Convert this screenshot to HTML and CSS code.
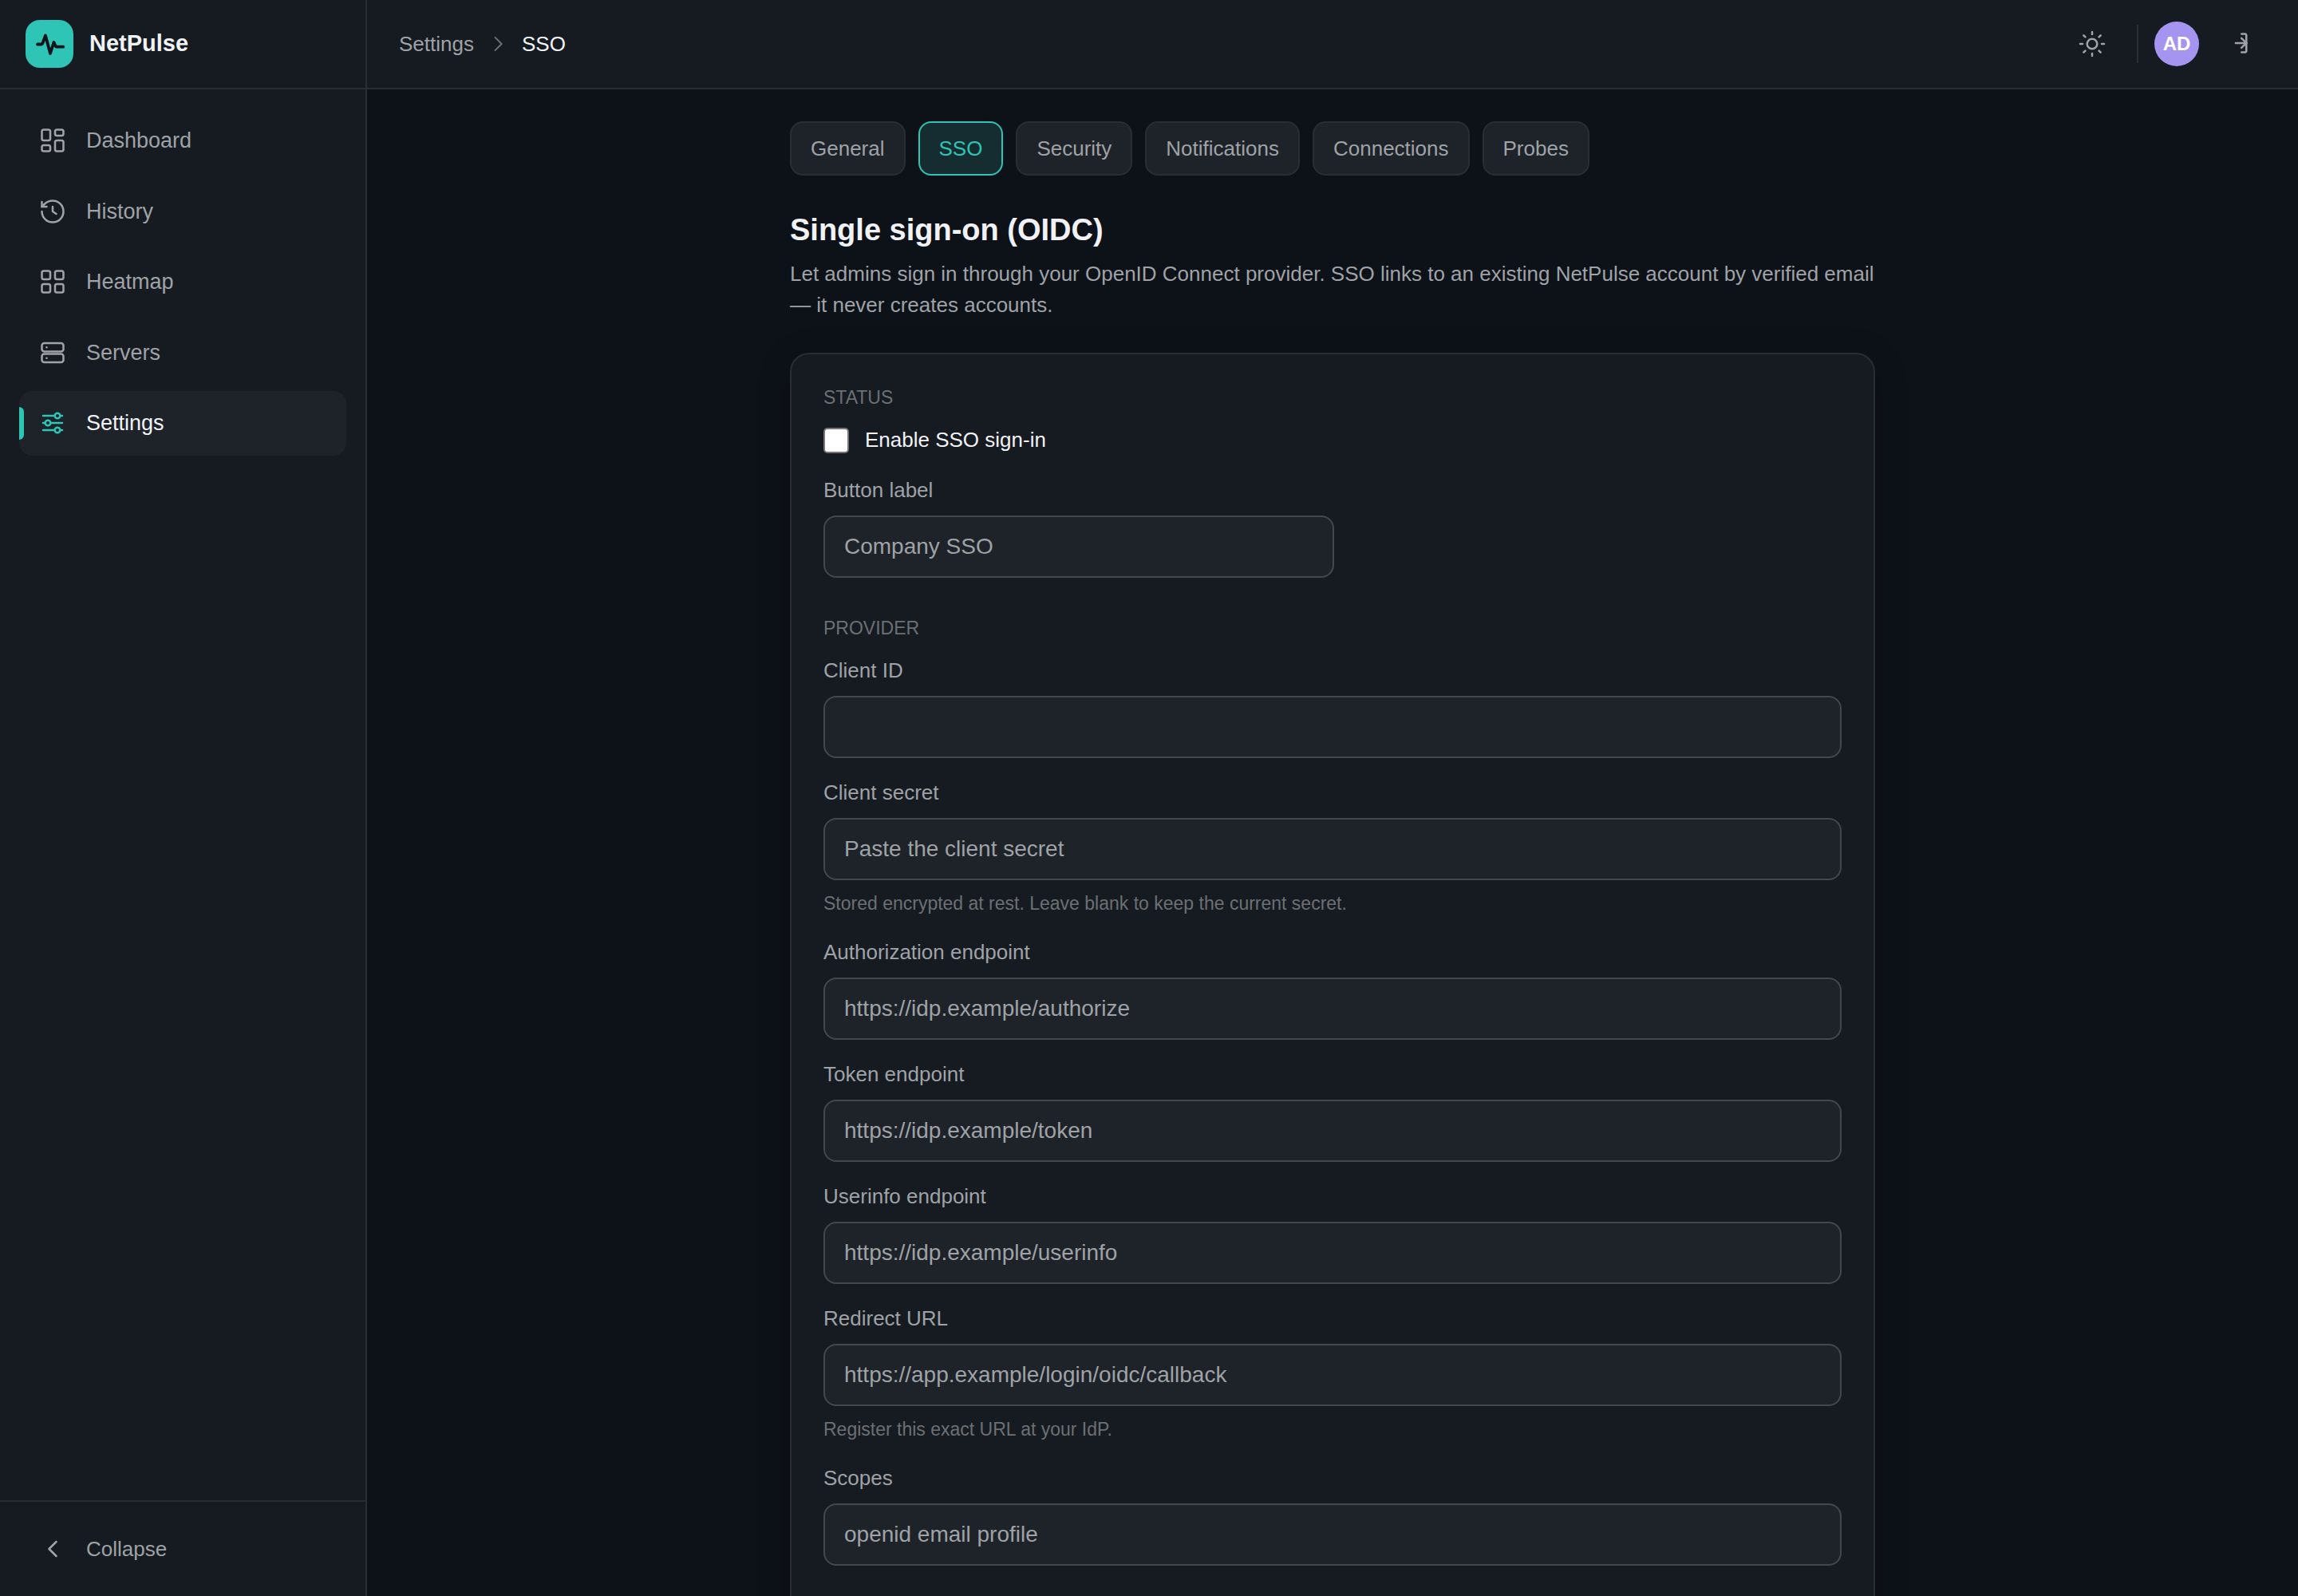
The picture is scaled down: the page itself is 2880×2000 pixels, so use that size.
FILE: index.html
```html
<!DOCTYPE html>
<html lang="en">
<head>
    <meta charset="utf-8">
    <title>SSO - Settings - NetPulse</title>
    <link rel="stylesheet" href="styles.css">
</head>
<body>
    <div class="app">
        <aside class="sidebar">
            <div class="brand">
                <svg class="brand-logo" viewBox="0 0 60 60" aria-hidden="true">
                    <rect width="60" height="60" rx="18" fill="#2ec4b6"/>
                    <path d="M15 30.5h4.5q1.5 0 2-1.5L25 19.5l6 22.5 4.5-14 1.8 4q.7 1.7 2.4 1.7h7.6" fill="none" stroke="#10161c" stroke-width="3.8" stroke-linecap="round" stroke-linejoin="round"/>
                </svg>
                <span class="brand-name">NetPulse</span>
            </div>

            <nav class="nav">
                <a class="nav-item" href="#">
                    <svg class="icon" viewBox="0 0 24 24"><rect x="3" y="3" width="7" height="9" rx="1.5"/><rect x="14" y="3" width="7" height="5" rx="1.5"/><rect x="14" y="12" width="7" height="9" rx="1.5"/><rect x="3" y="16" width="7" height="5" rx="1.5"/></svg>
                    Dashboard
                </a>
                <a class="nav-item" href="#">
                    <svg class="icon" viewBox="0 0 24 24"><path d="M3 12a9 9 0 1 0 9-9 9.75 9.75 0 0 0-6.74 2.74L3 8"/><path d="M3 4v4h4"/><path d="M12 8v4l3 2"/></svg>
                    History
                </a>
                <a class="nav-item" href="#">
                    <svg class="icon" viewBox="0 0 24 24"><rect x="3" y="3" width="7" height="7" rx="1.5"/><rect x="14" y="3" width="7" height="7" rx="1.5"/><rect x="3" y="14" width="7" height="7" rx="1.5"/><rect x="14" y="14" width="7" height="7" rx="1.5"/></svg>
                    Heatmap
                </a>
                <a class="nav-item" href="#">
                    <svg class="icon" viewBox="0 0 24 24"><rect x="3" y="4" width="18" height="7" rx="2"/><rect x="3" y="13" width="18" height="7" rx="2"/><path d="M7 7.5h.01M7 16.5h.01"/></svg>
                    Servers
                </a>
                <a class="nav-item active" href="#">
                    <svg class="icon" viewBox="0 0 24 24"><path d="M4 6h9.8M18.2 6H20M4 12h1.8M10.2 12H20M4 18h9.8M18.2 18H20"/><circle cx="16" cy="6" r="2.2"/><circle cx="8" cy="12" r="2.2"/><circle cx="16" cy="18" r="2.2"/></svg>
                    Settings
                </a>
            </nav>

            <div class="sidebar-footer">
                <button class="collapse" type="button">
                    <svg class="icon" viewBox="0 0 24 24"><path d="M15 6l-6 6 6 6"/></svg>
                    Collapse
                </button>
            </div>
        </aside>

        <header class="topbar">
            <div class="breadcrumb">
                <a href="#">Settings</a>
                <svg class="icon crumb-sep" viewBox="0 0 24 24"><path d="M9 5l7 7-7 7"/></svg>
                <span class="current">SSO</span>
            </div>
            <div class="topbar-actions">
                <button class="icon-btn" type="button" aria-label="Toggle theme">
                    <svg class="icon" viewBox="0 0 24 24"><circle cx="12" cy="12" r="4.2"/><path d="M12 2v2M12 20v2M2 12h2M20 12h2M4.9 4.9l1.4 1.4M17.7 17.7l1.4 1.4M4.9 19.1l1.4-1.4M17.7 6.3l1.4-1.4"/></svg>
                </button>
                <span class="divider"></span>
                <span class="avatar">AD</span>
                <button class="icon-btn logout" type="button" aria-label="Sign out">
                    <svg class="icon" viewBox="0 0 24 24"><path d="M15.5 3.6h2.6a1.4 1.4 0 0 1 1.4 1.4v12.6a1.4 1.4 0 0 1-1.4 1.4h-2.6"/><path d="M15.4 7.3l4.2 4-4.2 4"/><path d="M10.6 11.3h9"/></svg>
                </button>
            </div>
        </header>

        <main class="main">
            <div class="content">
                <nav class="tabs">
                    <a class="tab" href="#">General</a>
                    <a class="tab active" href="#">SSO</a>
                    <a class="tab" href="#">Security</a>
                    <a class="tab" href="#">Notifications</a>
                    <a class="tab" href="#">Connections</a>
                    <a class="tab" href="#">Probes</a>
                </nav>

                <div class="page-head">
                    <h1>Single sign-on (OIDC)</h1>
                    <p>Let admins sign in through your OpenID Connect provider. SSO links to an existing NetPulse account by verified email — it never creates accounts.</p>
                </div>

                <form class="card">
                    <section class="section">
                        <h2>Status</h2>
                        <label class="check">
                            <input type="checkbox" name="enabled">
                            Enable SSO sign-in
                        </label>
                        <div class="field short">
                            <label for="buttonLabel">Button label</label>
                            <input type="text" id="buttonLabel" placeholder="Company SSO">
                        </div>
                    </section>

                    <section class="section">
                        <h2>Provider</h2>
                        <div class="field">
                            <label for="clientId">Client ID</label>
                            <input type="text" id="clientId">
                        </div>
                        <div class="field">
                            <label for="clientSecret">Client secret</label>
                            <input type="password" id="clientSecret" placeholder="Paste the client secret">
                            <p class="hint">Stored encrypted at rest. Leave blank to keep the current secret.</p>
                        </div>
                        <div class="field">
                            <label for="authUrl">Authorization endpoint</label>
                            <input type="text" id="authUrl" placeholder="https://idp.example/authorize">
                        </div>
                        <div class="field">
                            <label for="tokenUrl">Token endpoint</label>
                            <input type="text" id="tokenUrl" placeholder="https://idp.example/token">
                        </div>
                        <div class="field">
                            <label for="userinfoUrl">Userinfo endpoint</label>
                            <input type="text" id="userinfoUrl" placeholder="https://idp.example/userinfo">
                        </div>
                        <div class="field">
                            <label for="redirectUrl">Redirect URL</label>
                            <input type="text" id="redirectUrl" placeholder="https://app.example/login/oidc/callback">
                            <p class="hint">Register this exact URL at your IdP.</p>
                        </div>
                        <div class="field">
                            <label for="scopes">Scopes</label>
                            <input type="text" id="scopes" placeholder="openid email profile">
                        </div>
                    </section>
                </form>
            </div>
        </main>
    </div>
</body>
</html>
```

FILE: styles.css
```css
:root {
    --bg: #0d1118;
    --surface: #161b21;
    --raised: #1e2229;
    --border: #2a2e31;
    --border-strong: #44484b;
    --text: #f0f2f5;
    --text-soft: #9fa2a6;
    --text-muted: #6c7074;
    --accent: #2ec4b6;
}

* {
    box-sizing: border-box;
}

body {
    margin: 0;
    background: var(--bg);
    color: var(--text);
    font-family: "Liberation Sans", Arial, sans-serif;
    font-size: 26px;
    line-height: 1.5;
}

h1, h2, p {
    margin: 0;
}

a {
    color: inherit;
    text-decoration: none;
}

button, input {
    font: inherit;
    color: inherit;
}

button {
    border: none;
    background: none;
    cursor: pointer;
}

.icon {
    width: 36px;
    height: 36px;
    flex: none;
    fill: none;
    stroke: currentColor;
    stroke-width: 1.7;
    stroke-linecap: round;
    stroke-linejoin: round;
}

.app {
    display: grid;
    grid-template-columns: 460px 1fr;
    grid-template-rows: 112px 1fr;
    height: 100vh;
}

/* sidebar */
.sidebar {
    grid-row: 1 / 3;
    display: flex;
    flex-direction: column;
    background: var(--surface);
    border-right: 2px solid var(--border);
}
.brand {
    display: flex;
    align-items: center;
    gap: 20px;
    height: 112px;
    padding: 0 32px;
    border-bottom: 2px solid var(--border);
}
.brand-logo {
    width: 60px;
    height: 60px;
}
.brand-name {
    font-size: 29px;
    font-weight: bold;
}
.nav {
    flex: 1;
    display: flex;
    flex-direction: column;
    gap: 8px;
    padding: 24px;
}
.nav-item {
    position: relative;
    display: flex;
    align-items: center;
    gap: 24px;
    padding: 20px 24px;
    border-radius: 16px;
    font-size: 27px;
    color: var(--text-soft);
}
.nav-item.active {
    background: var(--raised);
    color: var(--text);
}
.nav-item.active .icon {
    color: var(--accent);
}
.nav-item.active::before {
    content: "";
    position: absolute;
    left: 0;
    top: 20px;
    bottom: 20px;
    width: 6px;
    border-radius: 0 6px 6px 0;
    background: var(--accent);
}
.sidebar-footer {
    padding: 20px 24px;
    border-top: 2px solid var(--border);
}
.collapse {
    display: flex;
    align-items: center;
    gap: 24px;
    width: 100%;
    padding: 20px 24px;
    line-height: 38px;
    color: var(--text-soft);
}

/* top bar */
.topbar {
    display: flex;
    align-items: center;
    justify-content: space-between;
    padding: 0 40px;
    background: var(--surface);
    border-bottom: 2px solid var(--border);
}
.breadcrumb {
    display: flex;
    align-items: center;
    gap: 16px;
    color: var(--text-soft);
}
.breadcrumb .current {
    color: var(--text);
}
.crumb-sep {
    width: 28px;
    height: 28px;
    color: var(--text-muted);
}
.topbar-actions {
    display: flex;
    align-items: center;
}
.icon-btn {
    display: flex;
    align-items: center;
    justify-content: center;
    width: 72px;
    height: 72px;
    padding: 0;
    color: var(--text-soft);
}
.divider {
    width: 2px;
    height: 48px;
    margin: 0 20px;
    background: var(--border);
}
.avatar {
    width: 56px;
    height: 56px;
    border-radius: 50%;
    background: #a695f0;
    color: #fff;
    font-size: 24px;
    font-weight: bold;
    line-height: 56px;
    text-align: center;
}
.logout {
    margin-left: 12px;
}

/* content */
.main {
    overflow-y: auto;
    scrollbar-width: none;
    padding: 40px;
}
.content {
    max-width: 1360px;
    margin: 0 auto;
}
.tabs {
    display: flex;
    flex-wrap: wrap;
    gap: 16px;
    margin-bottom: 40px;
}
.tab {
    padding: 12px 24px;
    border: 2px solid var(--border);
    border-radius: 16px;
    background: var(--raised);
    color: var(--text-soft);
    line-height: 40px;
}
.tab.active {
    border-color: var(--accent);
    background: #152d30;
    color: var(--accent);
}
.page-head {
    margin-bottom: 40px;
}
.page-head h1 {
    margin-bottom: 8px;
    font-size: 38px;
    line-height: 56px;
}
.page-head p {
    color: var(--text-soft);
}

.card {
    padding: 40px;
    border: 2px solid var(--border);
    border-radius: 24px;
    background: var(--surface);
    box-shadow: 0 8px 48px rgba(0, 0, 0, 0.12);
}
.section {
    margin-bottom: 49px;
}
.section h2 {
    margin-bottom: 20px;
    font-size: 23px;
    font-weight: normal;
    line-height: 28px;
    text-transform: uppercase;
    color: var(--text-muted);
}
.check {
    display: flex;
    align-items: center;
    gap: 20px;
    margin-bottom: 24px;
}
.check input {
    appearance: none;
    width: 32px;
    height: 32px;
    margin: 0;
    border: 2px solid #767676;
    border-radius: 5px;
    background: #fff;
}
.check input:checked {
    background: var(--accent);
}
.field {
    display: flex;
    flex-direction: column;
    gap: 12px;
}
.field + .field {
    margin-top: 24px;
}
.field.short {
    max-width: 640px;
}
.field label {
    color: var(--text-soft);
}
.field input {
    width: 100%;
    height: 78px;
    padding: 0 24px;
    border: 2px solid var(--border-strong);
    border-radius: 16px;
    background: var(--raised);
    font-size: 28px;
}
.field input::placeholder {
    color: var(--text-soft);
    opacity: 1;
}
.hint {
    font-size: 23px;
    line-height: 35px;
    color: var(--text-muted);
}
```
